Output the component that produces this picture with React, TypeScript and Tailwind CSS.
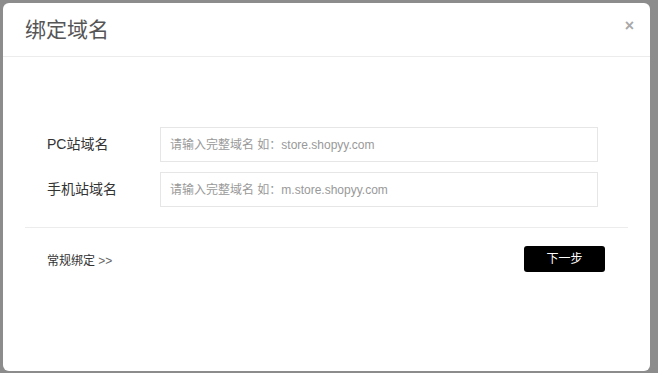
import React from 'react'

const font = { fontFamily: '"Liberation Sans", Arial, "Noto Sans CJK SC", sans-serif' }

export default function App() {
  return (
    <div className="h-[373px] w-[658px] bg-[#8c8c8c] pl-[3px] pt-[3px]" style={font}>
      <div className="flex h-[368px] w-[647px] flex-col rounded-[6px] bg-white">
        <div className="flex h-[54px] items-center justify-between border-b border-[#ececec] pl-[22px] pr-[16px]">
          <span className="text-[21px] text-[#555]">绑定域名</span>
          <span className="-mt-[8px] text-[16px] font-bold text-[#a8a8a8]">×</span>
        </div>

        <div className="flex flex-col gap-[10px] pl-[44px] pt-[70px]">
          <div className="flex items-center">
            <label className="w-[113px] text-[14px] text-[#333]">PC站域名</label>
            <input
              className="h-[35px] w-[438px] border border-[#e6e6e6] px-[9px] text-[12px] text-[#333] outline-none placeholder:text-[#999]"
              placeholder="请输入完整域名 如：store.shopyy.com"
            />
          </div>
          <div className="flex items-center">
            <label className="w-[113px] text-[14px] text-[#333]">手机站域名</label>
            <input
              className="h-[35px] w-[438px] border border-[#e6e6e6] px-[9px] text-[12px] text-[#333] outline-none placeholder:text-[#999]"
              placeholder="请输入完整域名 如：m.store.shopyy.com"
            />
          </div>
        </div>

        <div className="mx-[22px] mt-[20px] border-t border-[#ececec]" />

        <div className="flex items-center justify-between pl-[44px] pr-[45px] pt-[18px]">
          <span className="mt-[3px] text-[12px] text-[#333]">
            常规绑定 <span className="text-[#666]">&gt;&gt;</span>
          </span>
          <button className="h-[26px] w-[81px] rounded-[3px] bg-black text-[12px] text-white">下一步</button>
        </div>
      </div>
    </div>
  )
}
